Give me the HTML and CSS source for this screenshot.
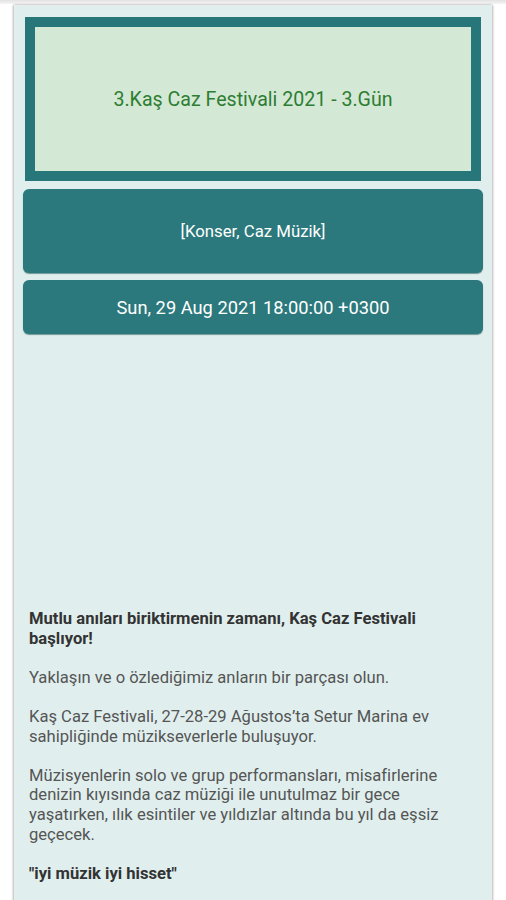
FILE: index.html
```html
<!DOCTYPE html>
<html lang="tr">
<head>
<meta charset="utf-8">
<title>3.Kaş Caz Festivali 2021 - 3.Gün</title>
<link rel="stylesheet" href="styles.css">
</head>
<body>
<div class="topbar"></div>
<main class="card">
  <div class="title-box">
    <div class="title-inner">3.Kaş Caz Festivali 2021 - 3.Gün</div>
  </div>
  <div class="pill tags">[Konser, Caz Müzik]</div>
  <div class="pill date">Sun, 29 Aug 2021 18:00:00 +0300</div>
  <div class="spacer"></div>
  <section class="desc">
    <p class="strong">Mutlu anıları biriktirmenin zamanı, Kaş Caz Festivali başlıyor!</p>
    <p>Yaklaşın ve o özlediğimiz anların bir parçası olun.</p>
    <p>Kaş Caz Festivali, 27-28-29 Ağustos’ta Setur Marina ev sahipliğinde müzikseverlerle buluşuyor.</p>
    <p>Müzisyenlerin solo ve grup performansları, misafirlerine denizin kıyısında caz müziği ile unutulmaz bir gece yaşatırken, ılık esintiler ve yıldızlar altında bu yıl da eşsiz geçecek.</p>
    <p class="strong">"iyi müzik iyi hisset"</p>
  </section>
</main>
</body>
</html>
```
FILE: styles.css
```css
* { box-sizing: border-box; }
html, body {
  margin: 0;
  padding: 0;
  background: #ffffff;
  font-family: Roboto, "Noto Sans", sans-serif;
}
body {
  height: 900px;
  overflow: hidden;
}
.topbar {
  height: 4px;
  background: linear-gradient(#e2e2e2, #f4f4f4);
}
.card {
  margin: 1px 14px 0 14px;
  background: #e0efee;
  box-shadow: -1px 0 2px rgba(120, 100, 110, 0.45), 1px 0 2px rgba(120, 100, 110, 0.45);
  padding: 12px 9px 40px 9px;
  display: flex;
  flex-direction: column;
  min-height: 900px;
}
.title-box {
  margin: 0 2px;
  height: 164px;
  border: 10px solid #27777a;
  background: #d3e9d6;
  display: flex;
  align-items: center;
  justify-content: center;
}
.title-inner {
  color: #2e7d32;
  font-size: 19.6px;
}
.pill {
  margin-top: 8px;
  background: #2b797c;
  border-radius: 6px;
  color: #ffffff;
  display: flex;
  align-items: center;
  justify-content: center;
  box-shadow: 0 1px 1px rgba(0, 60, 60, 0.5);
}
.tags {
  height: 84px;
  font-size: 16.8px;
}
.date {
  margin-top: 7px;
  height: 54px;
  font-size: 18.3px;
}
.spacer {
  height: 275px;
}
.desc {
  padding: 0 6px;
  font-size: 16.6px;
  line-height: 19.6px;
  color: #555555;
}
.desc p {
  margin: 0 0 19.6px 0;
}
.desc .strong {
  font-weight: bold;
  color: #333333;
}
```
